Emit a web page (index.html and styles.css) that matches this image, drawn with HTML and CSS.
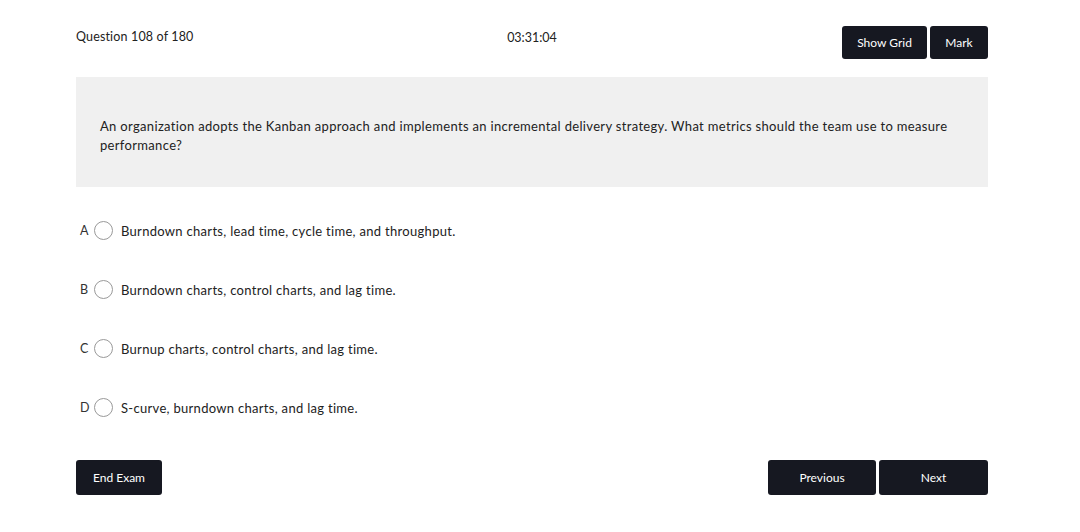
FILE: index.html
```html
<!DOCTYPE html>
<html>
<head>
<meta charset="utf-8">
<link rel="stylesheet" href="styles.css">
</head>
<body>
<div class="page">
  <div class="header">
    <div class="qnum">Question 108 of 180</div>
    <div class="timer">03:31:04</div>
    <div class="actions">
      <button class="btn btn-grid">Show Grid</button>
      <button class="btn btn-mark">Mark</button>
    </div>
  </div>
  <div class="question">
    An organization adopts the Kanban approach and implements an incremental delivery strategy. What metrics should the team use to measure performance?
  </div>
  <div class="options">
    <div class="option"><span class="letter">A</span><span class="radio"></span><span class="otext">Burndown charts, lead time, cycle time, and throughput.</span></div>
    <div class="option"><span class="letter">B</span><span class="radio"></span><span class="otext">Burndown charts, control charts, and lag time.</span></div>
    <div class="option"><span class="letter">C</span><span class="radio"></span><span class="otext">Burnup charts, control charts, and lag time.</span></div>
    <div class="option"><span class="letter">D</span><span class="radio"></span><span class="otext">S-curve, burndown charts, and lag time.</span></div>
  </div>
  <div class="footer">
    <button class="btn btn-end">End Exam</button>
    <div class="nav">
      <button class="btn btn-prev">Previous</button>
      <button class="btn btn-next">Next</button>
    </div>
  </div>
</div>
</body>
</html>
```
FILE: styles.css
```css
* { box-sizing: border-box; }
html, body { margin: 0; padding: 0; background: #fff; }
body { font-family: "Lato", "Open Sans", sans-serif; color: #222; }
.page { width: 912px; margin-left: 76px; padding-top: 26px; }
.header { display: grid; grid-template-columns: 1fr auto 1fr; align-items: start; height: 33px; }
.qnum { font-size: 12.5px; padding-top: 3px; letter-spacing: 0.15px; }
.timer { font-size: 12.5px; padding-top: 4px; }
.actions { display: flex; justify-content: flex-end; gap: 3px; }
.btn { background: #161821; color: #fff; border: none; border-radius: 3px; font-family: inherit; font-size: 12px; cursor: pointer; padding: 0; }
.btn-grid { width: 85px; height: 33px; }
.btn-mark { width: 58px; height: 33px; }
.question { margin-top: 18px; background: #f0f0f0; height: 110px; padding: 7px 24px 0; display: flex; align-items: center; font-size: 13px; line-height: 19px; letter-spacing: 0.33px; }
.options { padding-top: 34px; display: flex; flex-direction: column; gap: 40px; }
.option { display: flex; align-items: center; height: 19px; font-size: 13px; letter-spacing: 0.3px; }
.letter { width: 18px; padding-left: 4px; font-size: 12.5px; color: #333; letter-spacing: 0; }
.radio { width: 19px; height: 19px; border: 1px solid #999; border-radius: 50%; }
.otext { margin-left: 8px; }
.footer { display: flex; justify-content: space-between; margin-top: 43px; }
.btn-end { width: 86px; height: 35px; }
.nav { display: flex; gap: 3px; }
.btn-prev { width: 108px; height: 35px; }
.btn-next { width: 109px; height: 35px; }
```
